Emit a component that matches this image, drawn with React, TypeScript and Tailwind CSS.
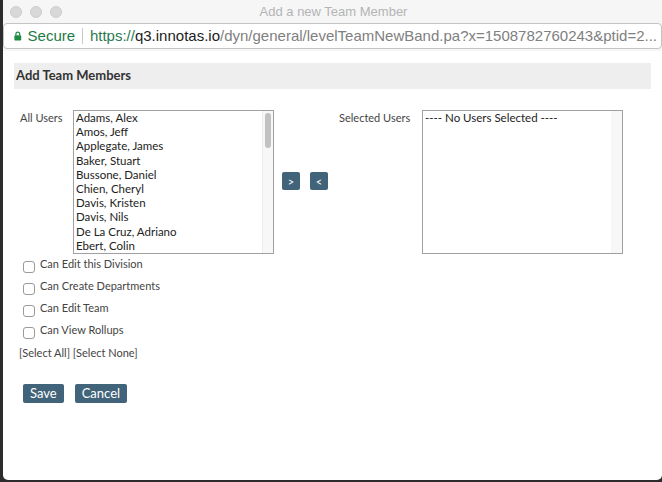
const users = [
  "Adams, Alex",
  "Amos, Jeff",
  "Applegate, James",
  "Baker, Stuart",
  "Bussone, Daniel",
  "Chien, Cheryl",
  "Davis, Kristen",
  "Davis, Nils",
  "De La Cruz, Adriano",
  "Ebert, Colin",
]

const perms = ["Can Edit this Division", "Can Create Departments", "Can Edit Team", "Can View Rollups"]

function TrafficLight() {
  return <span className="w-[12px] h-[12px] rounded-full bg-[#d8d8d8] border border-[#cdcdcd]" />
}

function Lock() {
  return (
    <svg width="10" height="12" viewBox="0 0 10 12">
      <path d="M2.5 5V3.5a2.5 2.5 0 0 1 5 0V5" fill="none" stroke="#1e8a44" strokeWidth="1.6" />
      <rect x="0.5" y="5" width="9" height="7" rx="1" fill="#1e8a44" />
    </svg>
  )
}

export default function App() {
  return (
    <div className="w-[662px] h-[482px] bg-[#2c2c2c] overflow-hidden" style={{ fontFamily: "Lato, 'Liberation Sans', sans-serif" }}>
      <div className="ml-[3px] w-[659px] h-[480px] bg-white rounded-b-[5px] flex flex-col overflow-hidden">
        {/* title bar */}
        <div className="h-[23px] bg-[#f6f6f6] relative flex items-center">
          <div className="flex gap-[8px] pl-[7px] pt-[1px]">
            <TrafficLight />
            <TrafficLight />
            <TrafficLight />
          </div>
          <div className="absolute inset-0 flex items-center justify-center text-[13px] text-[#b4b4b4] pl-[2px]" style={{ fontFamily: "'Liberation Sans', sans-serif" }}>
            Add a new Team Member
          </div>
        </div>
        {/* address bar */}
        <div className="bg-[#f6f6f6] pb-[2px]">
          <div className="h-[26px] bg-white border border-[#c4c4c4] rounded-[4px] flex items-center pl-[10px] pr-[4px] text-[15px] whitespace-nowrap overflow-hidden" style={{ fontFamily: "'Liberation Sans', sans-serif" }}>
            <Lock />
            <span className="ml-[6px] text-[#1e7a44]">Secure</span>
            <span className="mx-[7px] w-px h-[16px] bg-[#c8c8c8]" />
            <span className="text-[#2b7a4f]">https://</span>
            <span className="text-[#222]">q3.innotas.io</span>
            <span className="text-[#808080]">/dyn/general/levelTeamNewBand.pa?x=1508782760243&amp;ptid=2...</span>
          </div>
        </div>
        {/* body */}
        <div className="flex-1 px-[11px] pt-[12px] text-[11px] text-[#333]">
          <div className="h-[26px] bg-[#eeeeee] flex items-center pl-[2px] font-bold text-[13px] text-[#333] w-[637px]">Add Team Members</div>
          <div className="flex mt-[21px] pl-[6px]">
            <div className="w-[53px] pt-[0px] text-[#444]">All Users</div>
            <div className="w-[201px] h-[144px] border border-[#a0a0a0] flex">
              <div className="flex-1 pl-[2px] pt-[0px] text-[#222] text-[11.5px] leading-[14.2px]">
                {users.map((u) => (
                  <div key={u}>{u}</div>
                ))}
              </div>
              <div className="w-[11px] bg-[#f7f7f7] border-l border-[#ececec] pt-[2px] flex justify-center">
                <div className="w-[6px] h-[35px] rounded-full bg-[#c1c1c1]" />
              </div>
            </div>
            <div className="flex gap-[10px] pt-[62px] pl-[8px] w-[65px]">
              <button className="w-[18px] h-[18px] bg-[#41647a] rounded-[2px] text-white text-[11px] leading-none">&gt;</button>
              <button className="w-[18px] h-[18px] bg-[#41647a] rounded-[2px] text-white text-[11px] leading-none">&lt;</button>
            </div>
            <div className="w-[83px] pt-[0px] text-[#444]">Selected Users</div>
            <div className="w-[201px] h-[144px] border border-[#a0a0a0] flex">
              <div className="flex-1 pl-[2px] text-[#222] text-[11.5px] leading-[14.2px]">---- No Users Selected ----</div>
              <div className="w-[11px] bg-[#f7f7f7]" />
            </div>
          </div>
          <div className="mt-[3px] pl-[9px] flex flex-col gap-[8px]">
            {perms.map((p) => (
              <div key={p} className="flex items-start h-[14px] text-[#444] text-[11px]">
                <span className="mt-[4px] w-[12px] h-[12px] border border-[#9a9a9a] rounded-[3px] bg-white" />
                <span className="ml-[5px] -mt-[1px]">{p}</span>
              </div>
            ))}
          </div>
          <div className="mt-[8px] pl-[5px] text-[11px] text-[#444]">[Select All] [Select None]</div>
          <div className="mt-[22px] pl-[9px] flex gap-[11px]">
            <button className="h-[19px] px-[7px] bg-[#41647a] rounded-[2px] text-white text-[13px] leading-none">Save</button>
            <button className="h-[19px] px-[7px] bg-[#41647a] rounded-[2px] text-white text-[13px] leading-none">Cancel</button>
          </div>
        </div>
      </div>
    </div>
  )
}
